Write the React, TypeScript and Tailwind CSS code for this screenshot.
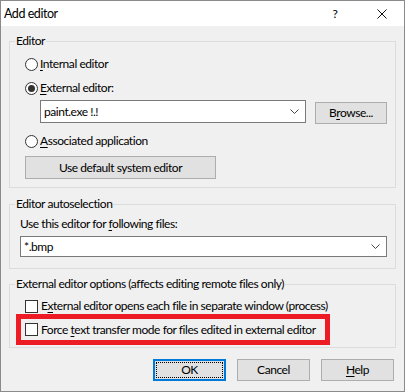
import { type ReactNode } from 'react'

function Radio({ checked }: { checked?: boolean }) {
  return (
    <span className="w-[13px] h-[13px] shrink-0 rounded-full border border-[#333] bg-white flex items-center justify-center">
      {checked && <span className="w-[7px] h-[7px] rounded-full bg-[#333]" />}
    </span>
  )
}

function Check() {
  return <span className="w-[13px] h-[13px] shrink-0 border border-[#333] bg-white" />
}

function Key({ children }: { children: ReactNode }) {
  return <span className="underline underline-offset-[2px] decoration-1">{children}</span>
}

function Chevron() {
  return (
    <svg width="9" height="5" viewBox="0 0 9 5" className="shrink-0">
      <polyline points="0.5,0.5 4.5,4.5 8.5,0.5" fill="none" stroke="#444" strokeWidth="1" />
    </svg>
  )
}

function Combo({ value, className }: { value: string; className: string }) {
  return (
    <div className={`flex items-center bg-white border border-[#7a7a7a] pl-[3px] pr-[6px] ${className}`}>
      <span className="flex-1">{value}</span>
      <Chevron />
    </div>
  )
}

function Button({ children, className = '' }: { children: ReactNode; className?: string }) {
  return (
    <div className={`flex items-center justify-center bg-[#e1e1e1] border border-[#adadad] ${className}`}>
      {children}
    </div>
  )
}

function Group({ label, children, className = '' }: { label: string; children: ReactNode; className?: string }) {
  return (
    <fieldset className={`border border-[#dcdcdc] m-0 p-0 min-w-0 ${className}`}>
      <legend className="ml-[5px] px-[1px] leading-[16px]">{label}</legend>
      {children}
    </fieldset>
  )
}

export default function App() {
  return (
    <div className="w-[405px] h-[392px] border border-[#8a8a8a] bg-[#f0f0f0] flex flex-col text-[12px] leading-[16px] tracking-[-0.45px] text-black whitespace-nowrap font-['Lato','Noto_Sans',sans-serif]">
      {/* Title bar */}
      <div className="h-[25px] bg-white flex items-center pl-[3px] shrink-0">
        <span className="flex-1 text-[12.5px]">Add editor</span>
        <span className="w-[12px] text-center mr-[36px]">?</span>
        <svg width="10" height="10" viewBox="0 0 10 10" className="mr-[17px]">
          <line x1="0.5" y1="0.5" x2="9.5" y2="9.5" stroke="#111" strokeWidth="1" />
          <line x1="9.5" y1="0.5" x2="0.5" y2="9.5" stroke="#111" strokeWidth="1" />
        </svg>
      </div>

      <div className="flex flex-col px-[8px] pt-[7px]">
        {/* Editor */}
        <Group label="Editor">
          <div className="flex flex-col pl-[15px] pb-[8px]">
            <div className="mt-[7px] h-[16px] flex items-center gap-[2px]">
              <Radio />
              <span><Key>I</Key>nternal editor</span>
            </div>
            <div className="mt-[8px] h-[16px] flex items-center gap-[2px]">
              <Radio checked />
              <span><Key>E</Key>xternal editor:</span>
            </div>
            <div className="mt-[4px] flex items-start">
              <Combo value="paint.exe !.!" className="ml-[15px] w-[266px] h-[23px]" />
              <Button className="ml-[9px] mt-[2px] w-[72px] h-[22px]">
                <span>B<Key>r</Key>owse...</span>
              </Button>
            </div>
            <div className="mt-[9px] h-[16px] flex items-center gap-[2px]">
              <Radio />
              <span><Key>A</Key>ssociated application</span>
            </div>
            <Button className="mt-[7px] w-[191px] h-[23px]">Use default system editor</Button>
          </div>
        </Group>

        {/* Autoselection */}
        <Group label="Editor autoselection" className="mt-[8px]">
          <div className="flex flex-col pl-[10px] pb-[11px]">
            <div className="mt-[4px] h-[16px] flex items-center">
              <span>Use this editor for <Key>f</Key>ollowing files:</span>
            </div>
            <Combo value="*.bmp" className="mt-[4px] w-[367px] h-[21px]" />
          </div>
        </Group>

        {/* Options */}
        <Group label="External editor options (affects editing remote files only)" className="mt-[7px]">
          <div className="flex flex-col pb-[2px]">
            <div className="mt-[6px] h-[16px] pl-[15px] flex items-center gap-[3px]">
              <Check />
              <span>E<Key>x</Key>ternal editor opens each file in separate window (process)</span>
            </div>
            <div className="ml-[6px] w-[314px] h-[31px] border-[5px] border-[#ed1c24] pl-[4px] flex items-center gap-[3px]">
              <Check />
              <span>Force <Key>t</Key>ext transfer mode for files edited in external editor</span>
            </div>
          </div>
        </Group>
      </div>

      {/* Buttons */}
      <div className="mt-[11px] flex justify-end gap-[11px] pr-[10px]">
        <div className="w-[73px] h-[22px] flex items-center justify-center bg-[#e1e1e1] border-2 border-[#0078d7] outline-1 outline-dotted outline-black outline-offset-[-4px]">
          OK
        </div>
        <Button className="w-[73px] h-[22px]">Cancel</Button>
        <Button className="w-[73px] h-[22px]"><span><Key>H</Key>elp</span></Button>
      </div>
    </div>
  )
}
